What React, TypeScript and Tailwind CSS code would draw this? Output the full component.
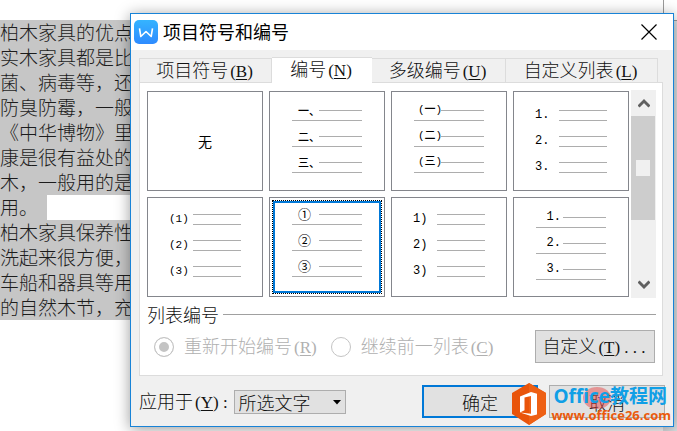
import { useState, type ReactNode } from 'react';

const DOC_LINES = [
  '柏木家具的优点',
  '实木家具都是比',
  '菌、病毒等，还',
  '防臭防霉，一般',
  '《中华博物》里',
  '康是很有益处的',
  '木，一般用的是',
  '用。',
  '柏木家具保养性',
  '洗起来很方便，',
  '车船和器具等用',
  '的自然木节，充',
];

interface NumberStyle {
  id: string;
  markers: string[];
  // wrapped: second rule runs under the marker, hanging: both rules sit beside it
  layout: 'none' | 'wrapped' | 'hanging';
  pad: string;
  marker: string;
}

const STYLES: NumberStyle[] = [
  { id: 'none', markers: [], layout: 'none', pad: '', marker: '' },
  { id: 'cn', markers: ['一、', '二、', '三、'], layout: 'wrapped', pad: 'pt-[10px]', marker: 'pl-1.5 text-left text-[11px] font-medium' },
  { id: 'cn-paren', markers: ['(一)', '(二)', '(三)'], layout: 'wrapped', pad: 'pt-[10px]', marker: "pl-1 text-left text-[11px] font-medium font-['Liberation_Mono','Noto_Sans_CJK_SC',monospace]" },
  { id: 'dot', markers: ['1.', '2.', '3.'], layout: 'hanging', pad: 'pt-[10px]', marker: 'text-[12px]' },
  { id: 'paren', markers: ['(1)', '(2)', '(3)'], layout: 'hanging', pad: 'pt-2', marker: 'text-[11px]' },
  { id: 'circle', markers: ['①', '②', '③'], layout: 'wrapped', pad: 'pt-2', marker: 'pl-1.5 text-left text-[13px] font-normal' },
  { id: 'half-paren', markers: ['1)', '2)', '3)'], layout: 'hanging', pad: 'pt-2', marker: 'text-[12px]' },
  { id: 'dot-wrap', markers: ['1.', '2.', '3.'], layout: 'wrapped', pad: 'pt-[11px]', marker: "pr-0.5 text-right text-[12px] font-['Liberation_Mono',monospace]" },
];

const TABS = [
  { label: '项目符号', hotkey: 'B', width: 'w-[133px]' },
  { label: '编号', hotkey: 'N', width: 'w-[100px]' },
  { label: '多级编号', hotkey: 'U', width: 'w-[134px]' },
  { label: '自定义列表', hotkey: 'L', width: 'w-[152px]' },
];

function Hotkey({ char, children }: { char: string; children?: ReactNode }) {
  return (
    <span className="px-0.5 font-['Liberation_Serif',serif] text-[17px]">
      (<span className="underline underline-offset-2">{char}</span>){children}
    </span>
  );
}

function Preview({ item, selected, onSelect }: { item: NumberStyle; selected: boolean; onSelect: () => void }) {
  return (
    <button
      type="button"
      aria-pressed={selected}
      aria-label={item.markers.join(' ') || '无'}
      onClick={onSelect}
      className="relative flex h-[100px] flex-1 basis-1/5 flex-col items-center border border-[#84868c] bg-white"
    >
      {item.layout === 'none' && <span className="m-auto text-[14px] leading-5 font-normal text-black">无</span>}
      {item.layout === 'wrapped' && (
        <span className={`block w-[70px] ${item.pad}`}>
          {item.markers.map(m => (
            <span key={m} className="block h-[26px]">
              <span className="flex h-4 items-center">
                <span className={`w-[27px] shrink-0 whitespace-nowrap leading-4 text-black ${item.marker}`}>{m}</span>
                <span className="h-px flex-1 bg-[#adadad]" />
              </span>
              <span className="mt-0.5 block h-px bg-[#adadad]" />
            </span>
          ))}
        </span>
      )}
      {item.layout === 'hanging' && (
        <span className={`block w-[72px] ${item.pad}`}>
          {item.markers.map(m => (
            <span key={m} className="flex h-[26px] items-center">
              <span className={`w-6 shrink-0 text-left font-['Liberation_Mono',monospace] leading-4 text-black ${item.marker}`}>{m}</span>
              <span className="flex h-[26px] flex-1 flex-col gap-[9px] pt-2">
                <span className="h-px bg-[#adadad]" />
                <span className="h-px bg-[#adadad]" />
              </span>
            </span>
          ))}
        </span>
      )}
      {selected && (
        <span className="absolute inset-[2px] border border-dotted border-black">
          <span className="block h-full border-2 border-[#0078d7]" />
        </span>
      )}
    </button>
  );
}

function ScrollBar() {
  return (
    <div className="flex h-[208px] w-[25px] flex-col bg-[#f0f0f0]">
      <button type="button" aria-label="向上" className="flex h-[26px] items-center justify-center">
        <svg width="12" height="10" viewBox="0 0 12 10">
          <path d="M0.5 8.5 6 3l5.5 5.5" fill="none" stroke="#606060" strokeWidth="3" />
        </svg>
      </button>
      <div className="mr-px flex h-[104px] items-center justify-center bg-[#cdcdcd]">
        <span className="h-4 w-[14px] bg-[#f0f0f0]" />
      </div>
      <button type="button" aria-label="向下" className="mt-auto flex h-[26px] items-center justify-center">
        <svg width="12" height="10" viewBox="0 0 12 10">
          <path d="M0.5 1.5 6 7l5.5-5.5" fill="none" stroke="#606060" strokeWidth="3" />
        </svg>
      </button>
    </div>
  );
}

function Watermark() {
  return (
    <div className="pointer-events-none absolute right-0.5 bottom-0 flex items-end gap-1">
      <svg width="36" height="44" viewBox="0 0 36 44">
        <path d="M18 1 35 11v21L18 43 1 32V11z" fill="#e9540a" />
        <path d="M18 1 35 11v21L18 43z" fill="#ee6014" />
        <path d="M9 14.5 20 10l6 1.8v20.7L20 34 9 30.5l11 1.2V14l-6.5 1.6v12.6L9 30.5z" fill="#fff" />
      </svg>
      <div className="relative flex flex-col pb-1">
        <span className="absolute top-[3px] left-8 h-[22px] w-7 rounded-[50%] bg-[#e84a4a]/50" />
        <span className="relative pl-0.5 font-['Open_Sans','Noto_Sans_CJK_SC',sans-serif] text-[19px] leading-[24px] font-bold whitespace-nowrap text-[#109fe6]">
          Office教程网
        </span>
        <a href="#office26" className="relative font-['Open_Sans',sans-serif] text-[13px] leading-[14px] font-bold text-[#ea5a0c]">
          www.office26.com
        </a>
      </div>
    </div>
  );
}

export default function App() {
  const [tab, setTab] = useState('N');
  const [picked, setPicked] = useState('circle');
  const [scope, setScope] = useState('所选文字');

  return (
    <div className="relative flex min-h-screen overflow-hidden bg-white font-['Noto_Sans_CJK_SC',sans-serif] text-[18px] leading-6 font-light text-[#111]">
      <main className="min-w-0 flex-1 pt-5 text-[19px] leading-[25px] text-[#1c1c1c]">
        {DOC_LINES.map(line => (
          <p key={line} className="whitespace-nowrap">
            <span className={`inline-block h-[25px] bg-[#c6c6c6] align-top leading-6 ${line.length < 5 ? 'w-[47px]' : 'w-40'}`}>{line}</span>
          </p>
        ))}
      </main>
      <aside className="flex w-[14px] flex-col">
        <div className="h-5 border-l border-[#9a9a9a]" />
        <div className="flex-1 border-t border-[#9a9a9a] bg-[#dfe3e6]" />
      </aside>

      <section
        role="dialog"
        aria-labelledby="dlg-title"
        className="absolute top-[13px] right-[3px] left-[130px] border border-[#1883d7] bg-[#f0f0f0] shadow-[0_2px_14px_rgba(0,0,0,0.4)]"
      >
        <header className="flex h-9 items-center gap-1 bg-white pr-4 pl-[3px]">
          <svg width="24" height="24" viewBox="0 0 24 24">
            <defs>
              <linearGradient id="wps" x1="0" y1="0" x2="0" y2="1">
                <stop offset="0" stopColor="#35b4ff" />
                <stop offset="1" stopColor="#2e8bff" />
              </linearGradient>
            </defs>
            <rect width="24" height="24" rx="5" fill="url(#wps)" />
            <path d="M5.5 8.3 6.8 16.5 12 11.5l5.2 5 1.3-8.2" fill="none" stroke="#fff" strokeWidth="1.6" strokeLinejoin="round" />
          </svg>
          <h1 id="dlg-title" className="pb-0.5 pl-px font-normal text-black">项目符号和编号</h1>
          <button type="button" aria-label="关闭" className="ml-auto">
            <svg width="16" height="16" viewBox="0 0 16 16">
              <path d="M0.5 0.5l15 15M15.5 0.5l-15 15" stroke="#000" strokeWidth="1.2" />
            </svg>
          </button>
        </header>

        <div className="pt-[7px] pr-[10px] pl-2">
          <div role="tablist" className="flex h-[25px] items-end">
            {TABS.map(t => (
              <button
                key={t.hotkey}
                type="button"
                role="tab"
                aria-selected={tab === t.hotkey}
                onClick={() => setTab(t.hotkey)}
                className={`${t.width} pb-0.5 text-center leading-5 whitespace-nowrap ${
                  tab === t.hotkey
                    ? 'relative -mb-px h-[26px] border-t border-[#dcdcdc] bg-white'
                    : 'h-6 border-t border-r border-[#dcdcdc] first:border-l'
                }`}
              >
                {t.label}<Hotkey char={t.hotkey} />
              </button>
            ))}
          </div>

          <div role="tabpanel" className="border border-[#dcdcdc] bg-white pt-[7px] pr-1.5 pb-3 pl-[7px]">
            <div className="flex items-center gap-0.5">
              <div className="grid flex-1 grid-cols-4 gap-1.5">
                {STYLES.map(s => (
                  <Preview key={s.id} item={s} selected={picked === s.id} onSelect={() => setPicked(s.id)} />
                ))}
              </div>
              <ScrollBar />
            </div>

            <fieldset className="pt-1">
              <legend className="float-left flex w-full items-center gap-1 pb-px">
                列表编号
                <span className="h-px flex-1 bg-[#a0a0a0]" />
              </legend>
              <div className="clear-both flex h-9 items-center gap-3 pt-[3px] pr-px pl-[7px] text-[#b0b0b0]">
                <label className="flex items-center gap-2.5 whitespace-nowrap">
                  <input
                    type="radio"
                    name="restart"
                    disabled
                    defaultChecked
                    className="size-5 appearance-none rounded-full border border-[#c4c4c4] bg-white checked:bg-[#c4c4c4] checked:shadow-[inset_0_0_0_4px_white]"
                  />
                  <span>重新开始编号<Hotkey char="R" /></span>
                </label>
                <label className="flex items-center gap-2.5 whitespace-nowrap">
                  <input
                    type="radio"
                    name="restart"
                    disabled
                    className="size-5 appearance-none rounded-full border border-[#c4c4c4] bg-white"
                  />
                  <span>继续前一列表<Hotkey char="C" /></span>
                </label>
                <button type="button" className="ml-auto h-[33px] w-[120px] border border-[#adadad] bg-[#e1e1e1] whitespace-nowrap text-[#111]">
                  自定义<Hotkey char="T"> . . .</Hotkey>
                </button>
              </div>
            </fieldset>
          </div>
        </div>

        <footer className="flex items-center px-2 pt-[9px] pb-2">
          <label htmlFor="scope" className="whitespace-nowrap">应用于<Hotkey char="Y"> :</Hotkey></label>
          <div className="relative ml-1">
            <select
              id="scope"
              value={scope}
              onChange={e => setScope(e.target.value)}
              className="block h-6 w-28 appearance-none border border-[#adadad] bg-[#e1e1e1] pl-1 leading-5"
            >
              <option>所选文字</option>
              <option>整个列表</option>
            </select>
            <svg width="8" height="5" viewBox="0 0 8 5" className="pointer-events-none absolute top-[10px] right-[5px]">
              <path d="M0 0h8L4 4.500z" fill="#000" />
            </svg>
          </div>
          <button type="button" className="ml-auto h-[33px] w-[116px] border-2 border-[#0078d7] bg-[#e1e1e1]">确定</button>
          <button type="button" className="ml-[11px] h-[33px] w-[116px] border border-[#adadad] bg-[#e1e1e1]">取消</button>
        </footer>
        <Watermark />
      </section>
    </div>
  );
}
